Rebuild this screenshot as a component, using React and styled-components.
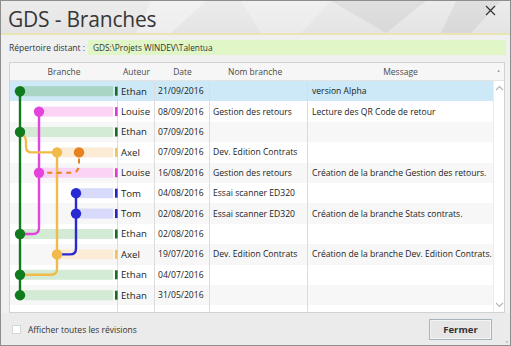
import React from "react";
import styled, { createGlobalStyle } from "styled-components";

const Global = createGlobalStyle`
  html, body { margin: 0; padding: 0; background: #ffffff; }
  * { box-sizing: border-box; }
`;

const FONT = `"Open Sans", "Noto Sans", "DejaVu Sans", sans-serif`;

const Window = styled.div`
  width: 511px;
  height: 346px;
  border: 1px solid #8e8e8e;
  background: #f0f0f0;
  display: flex;
  flex-direction: column;
  font-family: ${FONT};
  color: #222;
  overflow: hidden;
`;

const TitleBar = styled.div`
  position: relative;
  height: 34px;
  border-bottom: 2px solid #ebe4b4;
  background: linear-gradient(180deg, #ececec 0%, #e4e4e4 100%);
  display: flex;
  align-items: center;
  padding-left: 7px;
  flex-shrink: 0;
`;

const TitleDeco = styled.svg`
  position: absolute;
  left: 0;
  top: 0;
  width: 509px;
  height: 32px;
  pointer-events: none;
`;

const Title = styled.h1`
  position: relative;
  margin: 0;
  font-size: 21px;
  font-weight: 400;
  letter-spacing: -0.2px;
  color: #363636;
  line-height: 1;
  padding-top: 5px;
`;

const CloseBtn = styled.svg`
  position: absolute;
  right: 14px;
  top: 4px;
`;

const PathRow = styled.div`
  display: flex;
  align-items: center;
  margin: 5px 4px 0 8px;
  height: 15px;
  flex-shrink: 0;
`;

const PathLabel = styled.span`
  font-size: 8.5px;
  color: #333;
  width: 79px;
  white-space: nowrap;
`;

const PathField = styled.div`
  flex: 1;
  height: 15px;
  background: #e1f6c6;
  display: flex;
  align-items: center;
  padding-left: 5px;
  font-size: 8.3px;
  color: #333;
`;

const Table = styled.div`
  margin: 7px 5px 0 8px;
  flex: 1;
  border: 1px solid #d2d2d2;
  background: #ffffff;
  display: flex;
  flex-direction: column;
  min-height: 0;
`;

const COLS = "108px 37px 55px 98px 185px 11px";

const HeaderRow = styled.div`
  display: grid;
  grid-template-columns: ${COLS};
  height: 18px;
  background: #f6f6f6;
  border-bottom: 1px solid #e4e4e4;
  flex-shrink: 0;
`;

const HeadCell = styled.div`
  font-size: ${(p) => p.$size || 8.5}px;
  color: ${(p) => p.$color || "#4a4a4a"};
  display: flex;
  align-items: center;
  justify-content: ${(p) => p.$align || "center"};
  padding-left: ${(p) => p.$pl || 0}px;
`;

const Body = styled.div`
  position: relative;
  flex: 1;
  display: grid;
  grid-template-columns: 1fr 11px;
`;

const Rows = styled.div`
  position: relative;
  display: flex;
  flex-direction: column;
`;

const Row = styled.div`
  display: grid;
  grid-template-columns: 108px 37px 55px 98px 185px;
  height: 20.4px;
  flex-shrink: 0;
  background: ${(p) => (p.$selected ? "#cde8f6" : p.$odd ? "#f7f7f7" : "#ffffff")};
`;

const Filler = styled.div`
  flex: 1;
  display: grid;
  grid-template-columns: 108px 37px 55px 98px 185px;
`;

const Cell = styled.div`
  font-size: ${(p) => p.$size || 8.6}px;
  color: #222;
  display: flex;
  align-items: center;
  padding-left: ${(p) => p.$pl ?? 3}px;
  white-space: nowrap;
  overflow: hidden;
  border-right: ${(p) => (p.$line ? "1px solid #dcdcdc" : "none")};
`;

const Graph = styled.svg`
  position: absolute;
  left: 0;
  top: 0;
  pointer-events: none;
`;

const ScrollBar = styled.div`
  display: flex;
  flex-direction: column;
  justify-content: space-between;
  align-items: center;
  padding: 4px 0 4px;
  border-left: 1px solid #ececec;
`;

const Footer = styled.div`
  height: 32px;
  flex-shrink: 0;
  display: flex;
  align-items: center;
  padding: 0 18px 0 11px;
  background: #ebebeb;
  position: relative;
`;

const CheckBox = styled.span`
  width: 9px;
  height: 9px;
  background: #fff;
  border: 1px solid #d6d6d6;
  margin-right: 7px;
`;

const CheckLabel = styled.span`
  font-size: 8.5px;
  color: #333;
  flex: 1;
`;

const Button = styled.button`
  width: 63px;
  height: 21px;
  border: 1px solid #a6b4bc;
  background: #e6e6e6;
  font-family: ${FONT};
  font-size: 9.5px;
  font-weight: 700;
  color: #333;
  padding: 0;
  box-shadow: inset 0 0 0 1px #f4f4f4;
`;

const Grip = styled.svg`
  position: absolute;
  right: 2px;
  bottom: 2px;
`;

const rows = [
  { a: "Ethan", d: "21/09/2016", n: "", m: "version Alpha" },
  { a: "Louise", d: "08/09/2016", n: "Gestion des retours", m: "Lecture des QR Code de retour" },
  { a: "Ethan", d: "07/09/2016", n: "", m: "" },
  { a: "Axel", d: "07/09/2016", n: "Dev. Edition Contrats", m: "" },
  { a: "Louise", d: "16/08/2016", n: "Gestion des retours", m: "Création de la branche Gestion des retours." },
  { a: "Tom", d: "04/08/2016", n: "Essai scanner ED320", m: "" },
  { a: "Tom", d: "02/08/2016", n: "Essai scanner ED320", m: "Création de la branche Stats contrats." },
  { a: "Ethan", d: "02/08/2016", n: "", m: "" },
  { a: "Axel", d: "19/07/2016", n: "Dev. Edition Contrats", m: "Création de la branche Dev. Edition Contrats." },
  { a: "Ethan", d: "04/07/2016", n: "", m: "" },
  { a: "Ethan", d: "31/05/2016", n: "", m: "" },
];

const RH = 20.4;
const cy = (i) => RH / 2 + RH * i;

const C = {
  green: { node: "#117a1e", bar: "#d3ead4", tick: "#1b6b22" },
  greenSel: { node: "#117a1e", bar: "#a9d5c4", tick: "#1b6b22" },
  mag: { node: "#e444dc", bar: "#fbd3f5", tick: "#d93ed2" },
  yel: { node: "#f1bb4c", bar: "#fcecd6", tick: "#efc466" },
  ora: { node: "#e8821f" },
  blue: { node: "#2a2ad2", bar: "#d7dafb", tick: "#2626b8" },
};

const L = { g: 10, m: 29, y: 47, o: 69, b: 66 };

const bars = [
  [L.g, C.greenSel],
  [L.m, C.mag],
  [L.g, C.green],
  [L.y, C.yel],
  [L.m, C.mag],
  [L.b, C.blue],
  [L.b, C.blue],
  [L.g, C.green],
  [L.y, C.yel],
  [L.g, C.green],
  [L.g, C.green],
];

const nodes = [
  [L.g, 0, C.green.node],
  [L.m, 1, C.mag.node],
  [L.g, 2, C.green.node],
  [L.y, 3, C.yel.node],
  [L.o, 3, C.ora.node],
  [L.m, 4, C.mag.node],
  [L.b, 5, C.blue.node],
  [L.b, 6, C.blue.node],
  [L.g, 7, C.green.node],
  [L.y, 8, C.yel.node],
  [L.g, 9, C.green.node],
  [L.g, 10, C.green.node],
];

function BranchGraph() {
  const sw = 2.4;
  return (
    <Graph width="108" height={RH * 11} viewBox={`0 0 108 ${RH * 11}`}>
      {bars.map(([x, c], i) => (
        <g key={i}>
          <rect x={x} y={cy(i) - 5} width={103 - x} height={10} fill={c.bar} />
          <rect x={105} y={cy(i) - 4.5} width={2.6} height={9} fill={c.tick} />
        </g>
      ))}
      <line x1={L.g} y1={cy(0)} x2={L.g} y2={cy(10)} stroke={C.green.node} strokeWidth={sw} />
      <path
        d={`M${L.m} ${cy(1)} V${cy(7) - 6} Q${L.m} ${cy(7)} ${L.m - 6} ${cy(7)} H${L.g}`}
        fill="none"
        stroke={C.mag.node}
        strokeWidth={sw}
      />
      <path
        d={`M${L.g + 3} ${cy(2) + 3} Q16 ${cy(2) + 5} 16 ${cy(2) + 10} V${cy(3) - 6} Q16 ${cy(3)} 22 ${cy(3)} H${L.y}`}
        fill="none"
        stroke={C.yel.node}
        strokeWidth={sw}
      />
      <path
        d={`M${L.y} ${cy(3)} V${cy(9) - 6} Q${L.y} ${cy(9)} ${L.y - 6} ${cy(9)} H${L.g}`}
        fill="none"
        stroke={C.yel.node}
        strokeWidth={sw}
      />
      <path
        d={`M${L.b} ${cy(5)} V${cy(8) - 6} Q${L.b} ${cy(8)} ${L.b - 6} ${cy(8)} H${L.y}`}
        fill="none"
        stroke={C.blue.node}
        strokeWidth={sw}
      />
      <path
        d={`M${L.o} ${cy(3) + 6} V${cy(3) + 12} Q${L.o} ${cy(4)} ${L.o - 8} ${cy(4)} H${L.m + 5}`}
        fill="none"
        stroke={C.ora.node}
        strokeWidth={2}
        strokeDasharray="5 4.5"
      />
      {nodes.map(([x, i, col], k) => (
        <circle key={k} cx={x} cy={cy(i)} r={5.2} fill={col} />
      ))}
    </Graph>
  );
}

function Chevron({ up }) {
  return (
    <svg width="9" height="6" viewBox="0 0 9 6">
      <path
        d={up ? "M1 5 L4.5 1.5 L8 5" : "M1 1 L4.5 4.5 L8 1"}
        fill="none"
        stroke="#b4b4b4"
        strokeWidth="1.1"
      />
    </svg>
  );
}

export default function App() {
  return (
    <>
      <Global />
      <Window>
        <TitleBar>
          <TitleDeco viewBox="0 0 509 32">
            <polygon points="150,0 205,0 170,32 135,32" fill="rgba(255,255,255,0.35)" />
            <polygon points="330,0 425,0 385,32" fill="rgba(0,0,0,0.05)" />
            <polygon points="455,0 500,0 470,32 440,32" fill="rgba(0,0,0,0.05)" />
            <polygon points="240,0 330,0 300,32 260,32" fill="rgba(255,255,255,0.25)" />
          </TitleDeco>
          <Title>GDS - Branches</Title>
          <CloseBtn width="11" height="11" viewBox="0 0 11 11">
            <path d="M1 1 L10 10 M10 1 L1 10" stroke="#333" strokeWidth="1.2" />
          </CloseBtn>
        </TitleBar>
        <PathRow>
          <PathLabel>Répertoire distant :</PathLabel>
          <PathField>GDS:\Projets WINDEV\Talentua</PathField>
        </PathRow>
        <Table>
          <HeaderRow>
            <HeadCell>Branche</HeadCell>
            <HeadCell>Auteur</HeadCell>
            <HeadCell>Date</HeadCell>
            <HeadCell $align="flex-start" $pl={18}>Nom branche</HeadCell>
            <HeadCell>Message</HeadCell>
            <HeadCell $size={7} $color="#888">•</HeadCell>
          </HeaderRow>
          <Body>
            <Rows>
              {rows.map((r, i) => (
                <Row key={i} $selected={i === 0} $odd={i % 2 === 0 && i !== 0}>
                  <Cell $line $pl={0} />
                  <Cell $line $size={9.6}>{r.a}</Cell>
                  <Cell $line>{r.d}</Cell>
                  <Cell $line>{r.n}</Cell>
                  <Cell $pl={4}>{r.m}</Cell>
                </Row>
              ))}
              <Filler>
                <Cell $line />
                <Cell $line />
                <Cell $line />
                <Cell $line />
                <Cell />
              </Filler>
              <BranchGraph />
            </Rows>
            <ScrollBar>
              <Chevron up />
              <Chevron />
            </ScrollBar>
          </Body>
        </Table>
        <Footer>
          <CheckBox />
          <CheckLabel>Afficher toutes les révisions</CheckLabel>
          <Button>Fermer</Button>
          <Grip width="4" height="4" viewBox="0 0 4 4">
            <rect x="2" y="2" width="1.5" height="1.5" fill="#aaa" />
          </Grip>
        </Footer>
      </Window>
    </>
  );
}
